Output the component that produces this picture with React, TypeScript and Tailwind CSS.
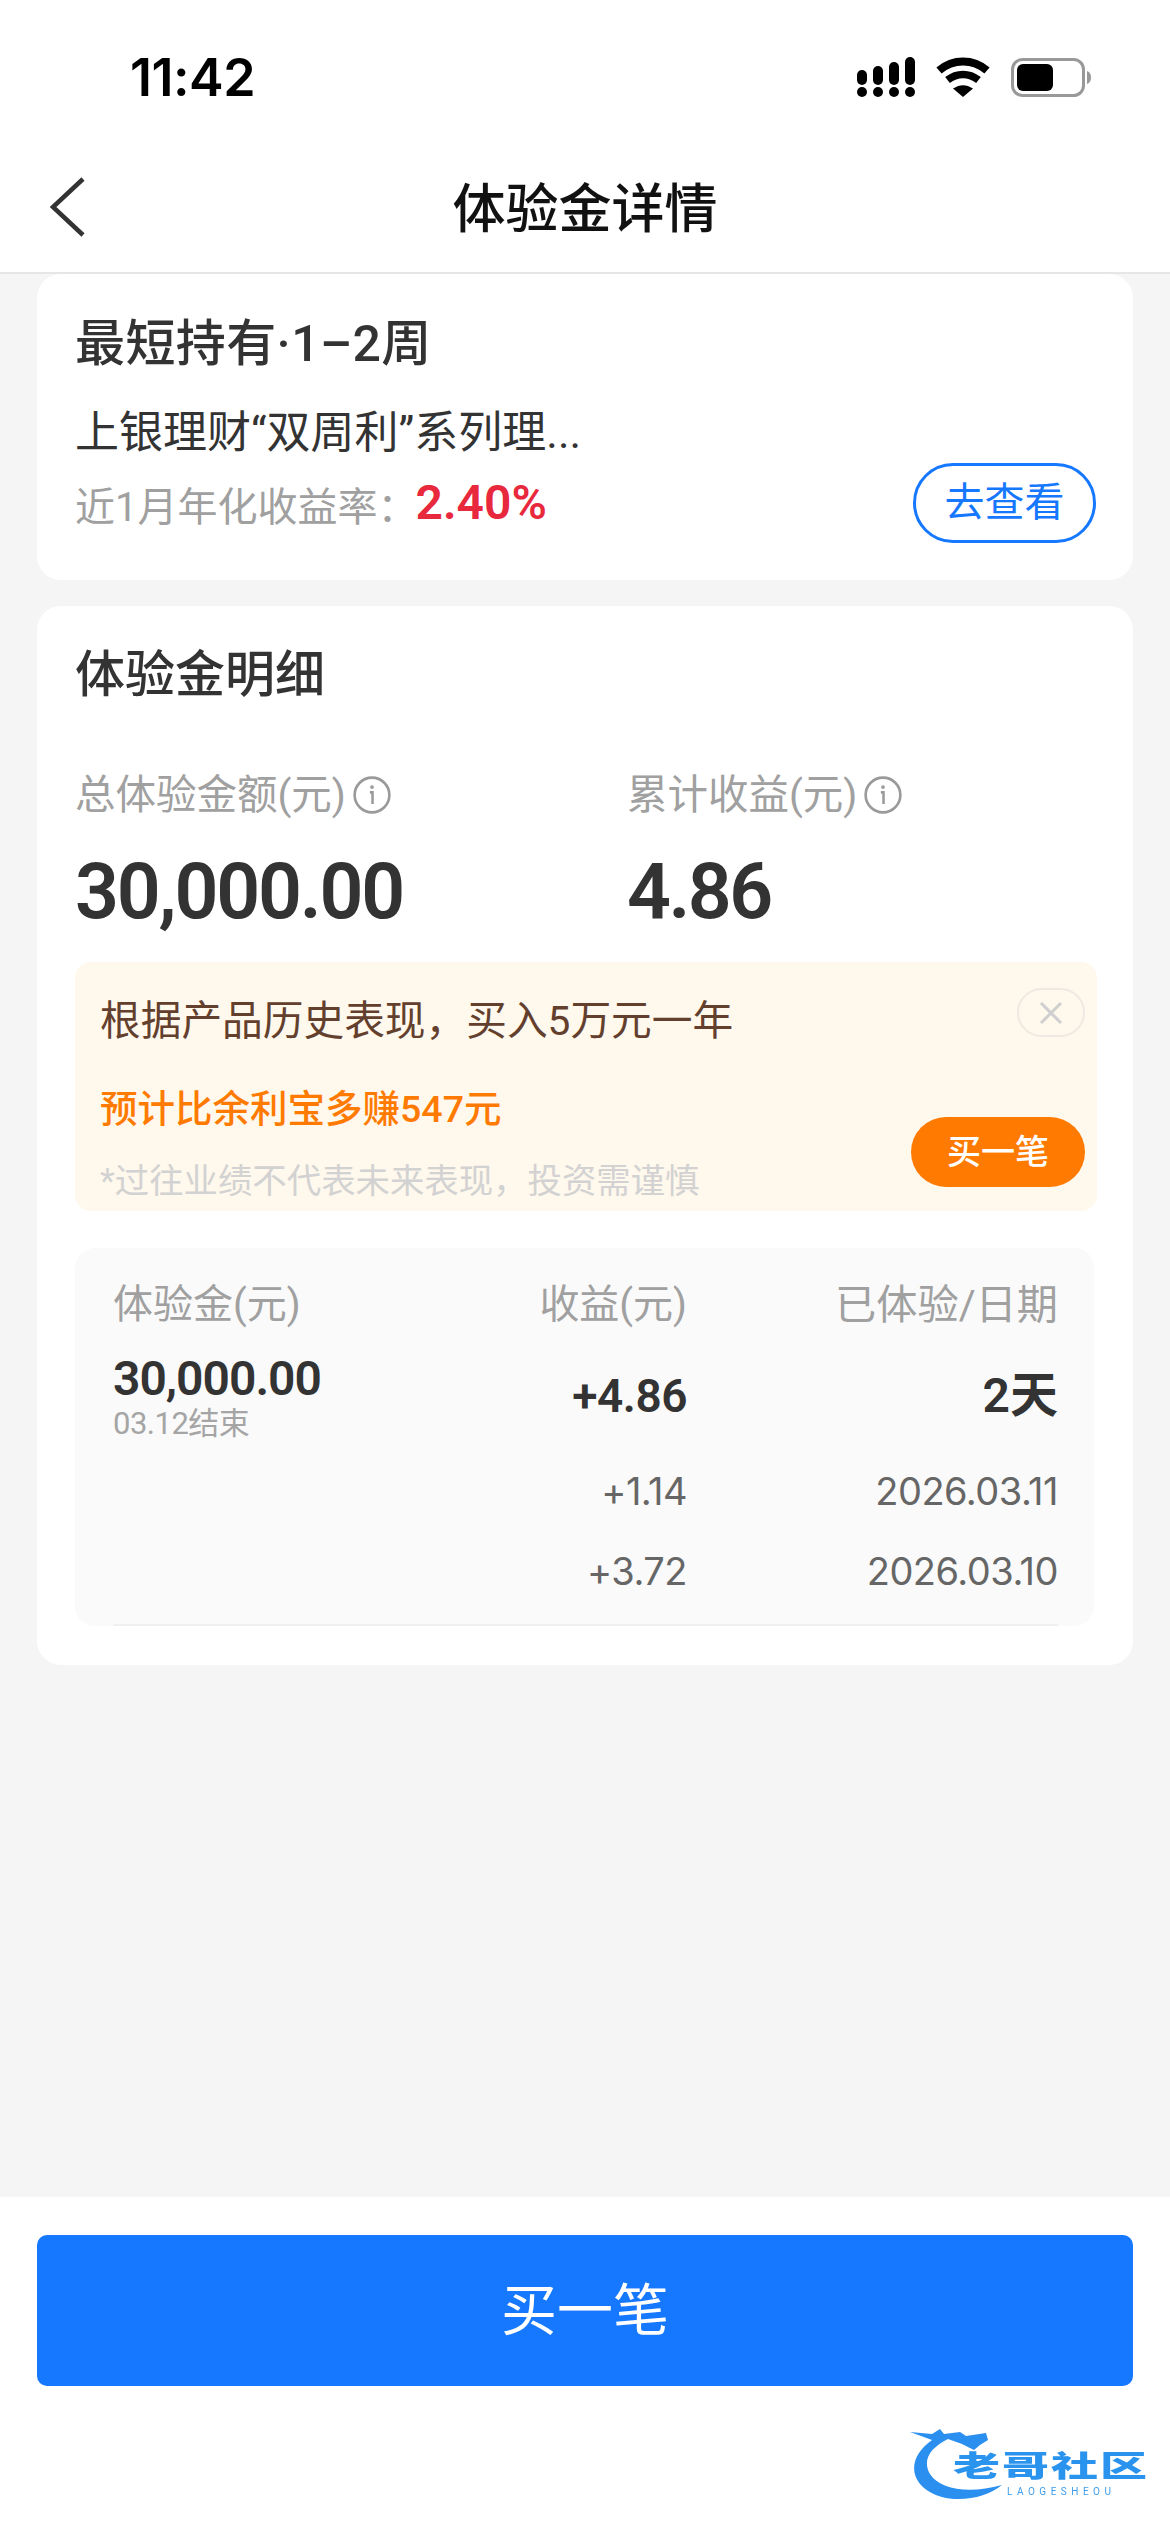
const font = { fontFamily: 'Roboto, "Noto Sans CJK SC", sans-serif' };

function Info() {
  return (
    <svg width="40" height="40" viewBox="0 0 38 38" fill="none" className="shrink-0">
      <circle cx="19" cy="19" r="16.5" stroke="#9a9a9a" strokeWidth="2.5" />
      <circle cx="19" cy="11.5" r="1.8" fill="#9a9a9a" />
      <path d="M17 16.5h2.5v11" stroke="#9a9a9a" strokeWidth="2.4" />
    </svg>
  );
}

function StatusIcons() {
  return (
    <svg width="240" height="44" viewBox="0 0 240 44" fill="none">
      <g fill="#000">
        <rect x="0" y="14" width="10" height="15" rx="5" />
        <rect x="16" y="10" width="10" height="19" rx="5" />
        <rect x="32" y="6" width="10" height="23" rx="5" />
        <rect x="48" y="1" width="10" height="28" rx="5" />
        <rect x="0" y="31" width="10" height="10" rx="5" />
        <rect x="16" y="31" width="10" height="10" rx="5" />
        <rect x="32" y="31" width="10" height="10" rx="5" />
        <rect x="48" y="31" width="10" height="10" rx="5" />
      </g>
      <path d="M82 14.5C96 2.5 116 2.5 130 14.5" stroke="#000" strokeWidth="8" />
      <path d="M90.500 24C100 16.500 112 16.500 121.500 24" stroke="#000" strokeWidth="7.500" />
      <path d="M96 32.500C103 28 109 28 116 32.500L106 41Z" fill="#000" />
      <rect x="155.500" y="3.500" width="71" height="36" rx="10" stroke="#999" strokeWidth="3" />
      <rect x="160" y="8" width="36" height="27" rx="6" fill="#000" />
      <path d="M230 15c3 1 4 3.500 4 6.500s-1 5.500-4 6.500z" fill="#999" />
    </svg>
  );
}

function Logo() {
  return (
    <div className="absolute left-[910px] top-[2428px] w-[240px] h-[74px] blur-[0.6px]">
      <svg width="240" height="74" viewBox="0 0 240 74" fill="none" className="absolute left-0 top-0">
        <path d="M0 4 L22 6 L30 1 L34 6 L50 4 L56 8 L76 5 L78 12 L70 17 L64 22 L52 16 L38 11 C20 20 12 32 20 46 C30 62 60 66 92 57 C74 72 36 78 14 60 C-2 46 2 26 22 12 Z" fill="#2b8ff0" />
      </svg>
      <span className="absolute left-[43px] top-[24px] text-[47px] leading-[30px] font-black tracking-[2px] text-[#2a93ee] whitespace-nowrap scale-y-[0.62]">老哥社区</span>
      <span className="absolute left-[97px] top-[58px] text-[10px] leading-[12px] tracking-[4.500px] text-[#3f9de8] whitespace-nowrap">LAOGESHEOU</span>
    </div>
  );
}

export default function App() {
  return (
    <div style={font} className="relative w-[1170px] h-[2532px] bg-[#f5f5f5] flex flex-col overflow-hidden">
      <header className="bg-white h-[274px] border-b-2 border-[#e6e6e6] shrink-0 flex flex-col">
        <div className="h-[155px] pl-[130px] pr-[73px] flex items-start justify-between pt-[50px]">
          <span className="text-[52px] leading-[56px] font-semibold text-black font-['Inter'] tracking-[-0.5px]">11:42</span>
          <div className="pt-[6px]"><StatusIcons /></div>
        </div>
        <div className="relative flex-1 flex items-start justify-center">
          <svg width="40" height="60" viewBox="0 0 40 60" fill="none" className="absolute left-[48px] top-[22px]">
            <path d="M35 2 L5 30 L35 58" stroke="#333" strokeWidth="4.500" />
          </svg>
          <h1 className="text-[53px] leading-[70px] font-medium text-[#111] mt-[20px]">体验金详情</h1>
        </div>
      </header>

      <main className="flex-1 px-[37px] flex flex-col gap-[26px]">
        <section className="bg-white rounded-[24px] h-[306px] px-[38px] relative shrink-0">
          <h2 className="text-[50px] leading-[60px] font-medium text-[#333] mt-[40px] tracking-[0.4px]">最短持有·1–2周</h2>
          <p className="text-[44px] leading-[50px] text-[#333] mt-[34px] whitespace-nowrap">上银理财“双周利”系列理...</p>
          <div className="flex items-center mt-[20px] h-[50px]">
            <span className="text-[40px] leading-[50px] text-[#a0a0a0] mt-[10px]">近1月年化收益率：</span>
            <span className="text-[48px] leading-[50px] font-semibold text-[#e8283c] -ml-[2px]">2.40%</span>
          </div>
          <button className="absolute right-[37px] top-[189px] w-[183px] h-[80px] rounded-full border-[3px] border-[#1677ff] text-[40px] leading-[50px] text-[#1677ff] bg-white">去查看</button>
        </section>

        <section className="bg-white rounded-[24px] h-[1059px] pl-[38px] pr-[36px] shrink-0">
          <h2 className="text-[50px] leading-[60px] font-medium text-[#333] mt-[39px]">体验金明细</h2>
          <div className="grid grid-cols-[552px_1fr] mt-[65px]">
            <div className="flex items-center gap-[6px] h-[50px]">
              <span className="text-[40.500px] leading-[50px] text-[#a0a0a0]">总体验金额(元)</span><Info />
            </div>
            <div className="flex items-center gap-[6px] h-[50px]">
              <span className="text-[40.500px] leading-[50px] text-[#a0a0a0]">累计收益(元)</span><Info />
            </div>
            <div className="text-[77px] leading-[90px] font-semibold text-[#333] mt-[27px] tracking-[-2.200px]">30,000.00</div>
            <div className="text-[77px] leading-[90px] font-semibold text-[#333] mt-[27px] tracking-[-2.500px]">4.86</div>
          </div>

          <div className="relative bg-[#fff8ec] rounded-[16px] h-[249px] mt-[25px] px-[25px]">
            <p className="text-[40.700px] leading-[50px] text-[#633f2e] pt-[34px] box-content">根据产品历史表现，买入5万元一年</p>
            <p className="text-[37.500px] leading-[46px] font-medium text-[#ff7a00] mt-[40px]">预计比余利宝多赚547元</p>
            <p className="text-[34.400px] leading-[44px] text-[#d2d2d2] mt-[27px] whitespace-nowrap">*过往业绩不代表未来表现，投资需谨慎</p>
            <div className="absolute right-[12px] top-[26px] w-[68px] h-[49px] rounded-full border-2 border-[#eeeae2] flex items-center justify-center">
              <svg width="26" height="26" viewBox="0 0 26 26" fill="none"><path d="M3 3l20 20M23 3L3 23" stroke="#cfcfcf" strokeWidth="3" /></svg>
            </div>
            <button className="absolute right-[12px] top-[155px] w-[174px] h-[70px] rounded-full bg-[#ff7a00] text-white text-[34px] leading-[40px] font-medium">买一笔</button>
          </div>

          <div className="bg-[#fafafa] rounded-[20px] w-[1019px] h-[378px] mt-[37px] pl-[38px] pr-[36px] relative">
            <div className="flex items-center h-[50px] text-[40px] leading-[50px] text-[#a0a0a0] translate-y-[32px]">
              <span className="w-[340px]">体验金(元)</span>
              <span className="w-[234px] text-right">收益(元)</span>
              <span className="flex-1 text-right text-[41.200px]">已体验/日期</span>
            </div>
            <div className="flex h-[100px] mt-[32px]">
              <div className="w-[340px] pt-[21px]">
                <div className="text-[48px] leading-[56px] font-semibold text-[#333] tracking-[-1px]">30,000.00</div>
                <div className="text-[31px] leading-[36px] text-[#a5a5a5] -mt-[1px] tracking-[-0.5px]">03.12结束</div>
              </div>
              <span className="w-[234px] text-right text-[46px] leading-[56px] font-semibold text-[#333] pt-[38px] box-content tracking-[-0.5px]">+4.86</span>
              <span className="flex-1 text-right text-[48px] leading-[56px] font-semibold text-[#333] pt-[38px] box-content">2天</span>
            </div>
            <div className="flex h-[50px] mt-[36px] text-[38px] leading-[50px] text-[#666] tracking-[-0.5px] font-['Inter']">
              <span className="w-[574px] text-right">+1.14</span>
              <span className="flex-1 text-right">2026.03.11</span>
            </div>
            <div className="flex h-[50px] mt-[30px] text-[38px] leading-[50px] text-[#666] tracking-[-0.5px] font-['Inter']">
              <span className="w-[574px] text-right">+3.72</span>
              <span className="flex-1 text-right">2026.03.10</span>
            </div>
            <div className="absolute left-[38px] right-[36px] bottom-0 border-b-2 border-[#f0f0f0]" />
          </div>
        </section>
      </main>

      <footer className="bg-white h-[335px] shrink-0 px-[37px] pt-[38px]">
        <button className="w-full h-[151px] rounded-[10px] bg-[#1677ff] text-white text-[56px] leading-[60px]">买一笔</button>
      </footer>
      <Logo />
    </div>
  );
}
